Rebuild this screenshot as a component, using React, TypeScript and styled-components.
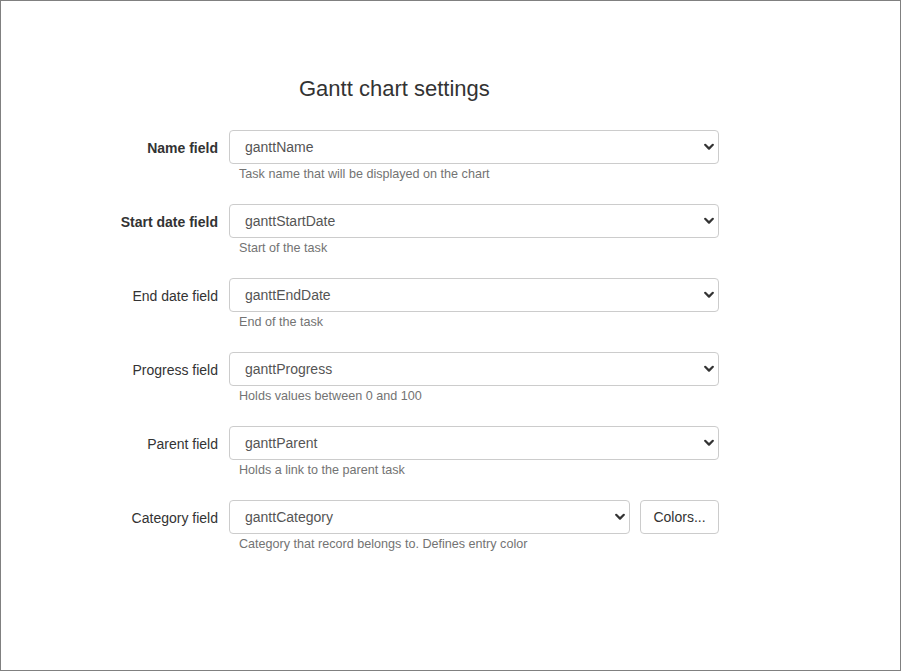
import React from "react";
import styled, { createGlobalStyle } from "styled-components";

const Global = createGlobalStyle`
  html, body { margin: 0; padding: 0; background: #fff; }
  body { font-family: "Liberation Sans", Arial, Helvetica, sans-serif; color: #333; }
  * { box-sizing: border-box; }
`;

const Frame = styled.div`
  width: 901px;
  height: 671px;
  border: 1px solid #808080;
  padding-top: 76px;
  background: #fff;
`;

const Title = styled.h3`
  margin: 0 0 29px 298px;
  font-size: 22px;
  line-height: 24px;
  font-weight: 400;
  color: #333;
`;

const Form = styled.div`
  display: flex;
  flex-direction: column;
  gap: 21px;
`;

const Row = styled.div`
  display: grid;
  grid-template-columns: 217px 490px;
  column-gap: 11px;
`;

const Label = styled.label<{ $bold?: boolean }>`
  text-align: right;
  font-size: 14px;
  line-height: 34px;
  height: 34px;
  padding-top: 1px;
  font-weight: ${(p) => (p.$bold ? 700 : 400)};
  color: #333;
`;

const Field = styled.div`
  display: flex;
  flex-direction: column;
`;

const Controls = styled.div`
  display: flex;
  gap: 10px;
`;

const SelectWrap = styled.div`
  position: relative;
  flex: 1;
`;

const Select = styled.select`
  appearance: none;
  -webkit-appearance: none;
  width: 100%;
  height: 34px;
  border: 1px solid #ccc;
  border-radius: 4px;
  background: #fff;
  padding: 0 30px 0 15px;
  font-family: "Liberation Sans", Arial, Helvetica, sans-serif;
  font-size: 14px;
  color: #555;
  outline: none;
`;

const Chevron = styled.svg`
  position: absolute;
  right: 5px;
  top: 13px;
  width: 10px;
  height: 8px;
  pointer-events: none;
`;

const Button = styled.button`
  width: 79px;
  height: 34px;
  border: 1px solid #ccc;
  border-radius: 4px;
  background: #fff;
  font-family: "Liberation Sans", Arial, Helvetica, sans-serif;
  font-size: 14px;
  color: #333;
  padding: 0;
`;

const Help = styled.div`
  margin-top: 2px;
  padding-left: 10px;
  font-size: 12.6px;
  line-height: 17px;
  color: #737373;
`;

type Item = { label: string; value: string; help: string; bold?: boolean; button?: boolean };

const items: Item[] = [
  { label: "Name field", value: "ganttName", help: "Task name that will be displayed on the chart", bold: true },
  { label: "Start date field", value: "ganttStartDate", help: "Start of the task", bold: true },
  { label: "End date field", value: "ganttEndDate", help: "End of the task" },
  { label: "Progress field", value: "ganttProgress", help: "Holds values between 0 and 100" },
  { label: "Parent field", value: "ganttParent", help: "Holds a link to the parent task" },
  { label: "Category field", value: "ganttCategory", help: "Category that record belongs to. Defines entry color", button: true },
];

const Dropdown = ({ value }: { value: string }) => (
  <SelectWrap>
    <Select defaultValue={value}>
      <option value={value}>{value}</option>
    </Select>
    <Chevron viewBox="0 0 10 8">
      <path d="M1.2 1.8 L5 5.6 L8.8 1.8" fill="none" stroke="#333" strokeWidth="2.2" strokeLinecap="round" strokeLinejoin="round" />
    </Chevron>
  </SelectWrap>
);

export default function App() {
  return (
    <>
      <Global />
      <Frame>
        <Title>Gantt chart settings</Title>
        <Form>
          {items.map((it) => (
            <Row key={it.label}>
              <Label $bold={it.bold}>{it.label}</Label>
              <Field>
                <Controls>
                  <Dropdown value={it.value} />
                  {it.button && <Button>Colors...</Button>}
                </Controls>
                <Help>{it.help}</Help>
              </Field>
            </Row>
          ))}
        </Form>
      </Frame>
    </>
  );
}
